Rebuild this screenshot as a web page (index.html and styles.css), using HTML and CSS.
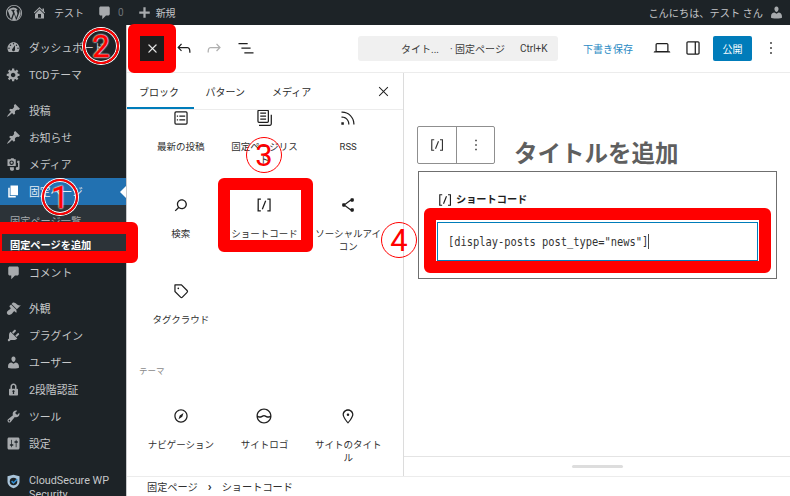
FILE: index.html
```html
<!DOCTYPE html>
<html lang="ja">
<head>
<meta charset="utf-8">
<title>固定ページを追加</title>
<link rel="stylesheet" href="styles.css">
</head>
<body>
<svg class="sprite" aria-hidden="true">
  <symbol id="d-dash" viewBox="0 0 20 20"><path fill-rule="evenodd" d="M3.76 16h12.48c1.1-1.37 1.76-3.11 1.76-5 0-4.42-3.58-8-8-8s-8 3.58-8 8c0 1.89.66 3.63 1.76 5zM10 4c.55 0 1 .45 1 1s-.45 1-1 1-1-.45-1-1 .45-1 1-1zM6 6c.55 0 1 .45 1 1s-.45 1-1 1-1-.45-1-1 .45-1 1-1zm8 0c.55 0 1 .45 1 1s-.45 1-1 1-1-.45-1-1 .45-1 1-1zm-5.37 5.55L12 7v6c0 1.1-.9 2-2 2s-2-.9-2-2c0-.57.24-1.08.63-1.45zM4 10c.55 0 1 .45 1 1s-.45 1-1 1-1-.45-1-1 .45-1 1-1zm12 0c.55 0 1 .45 1 1s-.45 1-1 1-1-.45-1-1 .45-1 1-1z"/></symbol>
  <symbol id="d-gear" viewBox="0 0 20 20"><path d="M18 12h-2.18c-.17.7-.44 1.35-.81 1.93l1.54 1.54-2.1 2.1-1.54-1.54c-.58.36-1.23.63-1.91.79V19H8v-2.18c-.68-.16-1.33-.43-1.91-.79l-1.54 1.54-2.12-2.12 1.54-1.54c-.36-.58-.63-1.23-.79-1.91H1V9.03h2.17c.16-.7.44-1.35.8-1.94L2.43 5.55l2.1-2.1 1.54 1.54c.58-.37 1.24-.64 1.93-.81V2h3v2.18c.68.16 1.33.43 1.91.79l1.54-1.54 2.12 2.12-1.54 1.54c.36.59.64 1.24.8 1.94H18V12zm-8.5 1.5c1.66 0 3-1.34 3-3s-1.34-3-3-3-3 1.34-3 3 1.34 3 3 3z"/></symbol>
  <symbol id="d-pin" viewBox="0 0 20 20"><path d="M10.44 3.02l1.82-1.82 6.36 6.35-1.83 1.82c-1.05-.68-2.48-.57-3.41.36l-.75.75c-.92.93-1.04 2.35-.35 3.41l-1.83 1.82-2.41-2.41-2.8 2.79c-.42.42-3.38 2.71-3.8 2.29s1.86-3.39 2.28-3.81l2.79-2.79L4.1 9.36l1.83-1.82c1.05.69 2.48.57 3.4-.36l.75-.75c.93-.92 1.05-2.35.36-3.41z"/></symbol>
  <symbol id="d-media" viewBox="0 0 20 20"><path fill-rule="evenodd" d="M2 3h4l1-1.500h3l1 1.500h2v9H2V3zm5.500 1.500a3 3 0 1 0 0 6 3 3 0 0 0 0-6zm0 1.500a1.500 1.500 0 1 1 0 3 1.500 1.500 0 0 1 0-3z"/><path d="M15 5h3v10.500a2.500 2 0 1 1-2-2V8h-1V5zM5 13.500h5.500v2a2.500 2 0 0 1-5 1.500z"/></symbol>
  <symbol id="d-page" viewBox="0 0 20 20"><path d="M6 15V2h10v13H6zm-1 1h8v2H3V5h2v11z"/></symbol>
  <symbol id="d-comment" viewBox="0 0 20 20"><path d="M5 2h10c1.100 0 2 .9 2 2v8c0 1.100-.9 2-2 2h-3l-5 5v-5H5c-1.100 0-2-.9-2-2V4c0-1.100.9-2 2-2z"/></symbol>
  <symbol id="d-brush" viewBox="0 0 20 20"><path d="M14.480 11.060L7.410 3.990l1.500-1.500c.5-.56 2.300-.47 3.510.32 1.210.8 1.430 1.280 2.910 2.100 1.180.64 2.450 1.260 4.450.85zm-.710.710L6.700 4.700 4.930 6.470c-.39.390-.39 1.020 0 1.410l1.060 1.060c.39.390.39 1.030 0 1.420-.6.600-1.430 1.110-2.210 1.690-.35.260-.700.530-1.010.840C1.430 13.230.28 16.060 2 17.800c1.730 1.730 4.420.63 5.760-.71.320-.31.640-.67.890-1 .58-.78 1.100-1.610 1.690-2.210.39-.39 1.020-.39 1.410 0l1.060 1.060c.39.390 1.020.39 1.410 0z"/></symbol>
  <symbol id="d-plug" viewBox="0 0 20 20"><path d="M13.110 4.360L9.870 7.600 8 5.730l3.240-3.240c.35-.34 1.050-.2 1.560.32.52.51.66 1.210.31 1.550zm-8 1.770l.91-1.120 9.010 9.010-1.190.84c-.71.71-2.630 1.160-3.820 1.160H6.140L4.900 17.260c-.59.59-1.540.59-2.120 0-.59-.58-.59-1.530 0-2.120l1.240-1.240v-3.880c0-1.130.4-3.190 1.090-3.890zm7.260 3.970l3.240-3.240c.34-.35 1.040-.21 1.550.31.52.51.66 1.210.31 1.550l-3.240 3.250z"/></symbol>
  <symbol id="d-user" viewBox="0 0 20 20"><path d="M10 9.250c-2.270 0-2.730-3.440-2.730-3.440C7 4.020 7.820 2 9.970 2c2.160 0 2.980 2.020 2.710 3.810 0 0-.41 3.440-2.68 3.440zm0 2.570L12.720 10c2.390 0 4.520 2.330 4.520 4.530v2.490s-3.650 1.130-7.240 1.130c-3.650 0-7.240-1.130-7.240-1.130v-2.490c0-2.250 1.940-4.480 4.470-4.480z"/></symbol>
  <symbol id="d-lock" viewBox="0 0 20 20"><path d="M14 9h1c.55 0 1 .45 1 1v7c0 .55-.45 1-1 1H5c-.55 0-1-.45-1-1v-7c0-.55.45-1 1-1h1V6c0-2.200 1.800-4 4-4s4 1.800 4 4v3zm-2 0V6c0-1.100-.9-2-2-2s-2 .9-2 2v3h4zm-1 7l-.36-2.150c.51-.24.86-.75.86-1.350 0-.83-.67-1.500-1.500-1.500s-1.500.67-1.500 1.500c0 .6.35 1.110.86 1.350L9 16h2z"/></symbol>
  <symbol id="d-wrench" viewBox="0 0 20 20"><path d="M16.680 9.770c-1.340 1.340-3.300 1.670-4.950.99l-5.410 6.520c-.99.99-2.590.99-3.580 0s-.99-2.590 0-3.570l6.520-5.420c-.68-1.650-.35-3.610.99-4.950 1.280-1.280 3.120-1.620 4.720-1.060l-2.890 2.890 2.820 2.820 2.860-2.870c.53 1.580.18 3.390-1.080 4.650zM3.810 16.210c.4.39 1.040.39 1.430 0 .4-.4.4-1.040 0-1.430-.39-.4-1.030-.4-1.430 0-.39.39-.39 1.030 0 1.430z"/></symbol>
  <symbol id="d-settings" viewBox="0 0 20 20"><path d="M18 16V4c0-1.100-.9-2-2-2H4c-1.100 0-2 .9-2 2v12c0 1.100.9 2 2 2h12c1.100 0 2-.9 2-2zM8 11h1c.55 0 1 .45 1 1s-.45 1-1 1H8v1.500c0 .28-.22.5-.5.5s-.5-.22-.5-.5V13H6c-.55 0-1-.45-1-1s.45-1 1-1h1V5.500c0-.28.22-.5.5-.5s.5.22.5.5V11zm5-2h-1c-.55 0-1-.45-1-1s.45-1 1-1h1V5.500c0-.28.22-.5.5-.5s.5.22.5.5V7h1c.55 0 1 .45 1 1s-.45 1-1 1h-1v5.500c0 .28-.22.5-.5.5s-.5-.22-.5-.5V9z"/></symbol>
  <symbol id="d-home" viewBox="0 0 20 20"><path d="M16 8.500l1.530 1.530-1.060 1.060L10 4.620l-6.470 6.470-1.060-1.060L10 2.500l4 4v-2h2v4zm-6-2.460l6 5.990V18H4v-5.970zM12 17v-5H8v5h4z"/></symbol>
  <symbol id="d-plus" viewBox="0 0 20 20"><path d="M17 8.500v3h-5.500V17h-3v-5.500H3v-3h5.500V3h3v5.500z"/></symbol>
  <symbol id="d-wp" viewBox="0 0 20 20"><path fill-rule="evenodd" d="M10 1a9 9 0 1 1 0 18 9 9 0 0 1 0-18zm0 1a8 8 0 1 0 0 16 8 8 0 0 0 0-16z"/><path d="M3.200 7.500l3.400 9.300 2.300-6.500-1-2.800H7V6.300h3.800v1.200h-1l2.600 7.800 1.100-3.300c.5-1.500.3-2.600-.4-3.700-.4-.7-.3-1.900 1-2.200a7.200 7.200 0 0 0-11.200 1.400h1.600zM10.100 11l-2.200 6.500a7.300 7.300 0 0 0 4.400-.1zM16.100 6.500c.3 2-.4 3.300-.9 4.800l-2.200 5.900a7.200 7.200 0 0 0 3.100-10.700z"/></symbol>

  <symbol id="g-undo" viewBox="0 0 24 24"><path d="M18.300 11.700c-.6-.6-1.400-.9-2.300-.9H6.700l2.900-3.300-1.100-1-4.500 5L8.500 16l1-1-2.700-2.700H16c.5 0 .9.2 1.300.5 1 1 1 3.400 1 4.500v.3h1.500v-.2c0-1.500 0-4.300-1.500-5.700z"/></symbol>
  <symbol id="g-redo" viewBox="0 0 24 24"><path d="M15.600 6.500l-1.100 1 2.900 3.300H8c-.9 0-1.700.3-2.300.9-1.400 1.500-1.400 4.200-1.400 5.600v.2h1.500v-.3c0-1.100 0-3.500 1-4.500.3-.3.7-.5 1.300-.5h9.200L14.500 15l1.100 1.100 4.600-4.600-4.600-5z"/></symbol>
  <symbol id="g-list" viewBox="0 0 24 24"><path d="M3 6h11v1.500H3V6Zm3.500 5.500h11V13h-11v-1.500ZM21 17H10v1.500h11V17Z"/></symbol>
  <symbol id="g-close" viewBox="0 0 24 24"><path d="m13.060 12 6.470-6.470-1.060-1.060L12 10.940 5.530 4.470 4.470 5.530 10.940 12l-6.470 6.470 1.060 1.060L12 13.060l6.470 6.470 1.060-1.060L13.060 12Z"/></symbol>
  <symbol id="g-desktop" viewBox="0 0 24 24"><path d="M20.500 16h-.7V8c0-1.100-.9-2-2-2H6.200c-1.100 0-2 .9-2 2v8h-.7c-.8 0-1.500.7-1.500 1.500h20c0-.8-.7-1.500-1.500-1.500zM5.700 8c0-.3.2-.5.5-.5h11.600c.3 0 .5.2.5.5v7.600H5.700V8z"/></symbol>
  <symbol id="g-drawer" viewBox="0 0 24 24"><path d="M18 4H6c-1.100 0-2 .9-2 2v12c0 1.100.9 2 2 2h12c1.100 0 2-.9 2-2V6c0-1.100-.9-2-2-2zm-4 14.500H6c-.3 0-.5-.2-.5-.5V6c0-.3.2-.5.5-.5h8v13zm4.500-.5c0 .3-.2.5-.5.5h-2.500v-13H18c.3 0 .5.2.5.5v12z"/></symbol>
  <symbol id="g-kebab" viewBox="0 0 24 24"><path d="M13 19h-2v-2h2v2zm0-6h-2v-2h2v2zm0-6h-2V5h2v2z"/></symbol>
  <symbol id="g-short" viewBox="0 0 24 24"><path d="M16 4.200v1.500h2.500v12.500H16v1.500h4V4.200h-4zM4.200 19.800h4v-1.500H5.800V5.800h2.500V4.200h-4l-.1 15.600zm5.100-3.100l1.400.6 4-10-1.400-.6-4 10z"/></symbol>
  <symbol id="g-search" viewBox="0 0 24 24"><path d="M13 5c-3.300 0-6 2.700-6 6 0 1.400.5 2.700 1.300 3.700l-3.800 3.800 1.100 1.100 3.800-3.800c1 .8 2.300 1.300 3.700 1.300 3.300 0 6-2.700 6-6S16.300 5 13 5zm0 10.500c-2.500 0-4.500-2-4.500-4.500s2-4.500 4.500-4.500 4.500 2 4.500 4.500-2 4.500-4.500 4.500z"/></symbol>
  <symbol id="g-share" viewBox="0 0 24 24"><path d="M9 11.800l6.100-4.500c.1.400.4.700.9.700h2c.6 0 1-.4 1-1V5c0-.6-.4-1-1-1h-2c-.6 0-1 .4-1 1v.4l-6.400 4.800c-.2-.1-.4-.2-.6-.2H6c-.6 0-1 .4-1 1v2c0 .6.4 1 1 1h2c.2 0 .4-.1.6-.2l6.400 4.800v.4c0 .6.4 1 1 1h2c.6 0 1-.4 1-1v-2c0-.6-.4-1-1-1h-2c-.5 0-.8.3-.9.700L9 12.200v-.4z"/></symbol>
  <symbol id="g-tag" viewBox="0 0 24 24"><path d="M4.750 4a.75.75 0 0 0-.75.75v7.826c0 .2.08.39.22.53l6.720 6.716a2.313 2.313 0 0 0 3.276-.001l5.610-5.611-.531-.53.532.528a2.315 2.315 0 0 0 0-3.264L13.104 4.220a.75.75 0 0 0-.53-.22H4.750ZM19 12.576a.815.815 0 0 1-.236.574l-5.610 5.611a.814.814 0 0 1-1.153 0L5.500 12.264V5.500h6.763l6.500 6.502a.816.816 0 0 1 .237.574ZM8.750 9.750a1 1 0 1 0 0-2 1 1 0 0 0 0 2Z"/></symbol>
  <symbol id="g-nav" viewBox="0 0 24 24"><path d="M12 4c-4.400 0-8 3.600-8 8s3.600 8 8 8 8-3.600 8-8-3.600-8-8-8zm0 14.500c-3.600 0-6.500-2.900-6.500-6.500S8.400 5.500 12 5.500s6.500 2.900 6.500 6.500-2.900 6.500-6.500 6.500zM9 16l4.500-3L15 8.400l-4.500 3L9 16z"/></symbol>
  <symbol id="g-logo" viewBox="0 0 24 24"><path d="M12 3c-5 0-9 4-9 9s4 9 9 9 9-4 9-9-4-9-9-9zm0 1.500c3.900 0 7.100 3 7.500 6.800-1.100.9-2.200 1.300-3.300.9-1.300-.5-2.600-1.500-4.200-1.500s-3 1-4.200 1.500c-1.100.4-2.200 0-3.300-.9.4-3.800 3.600-6.800 7.500-6.800zm0 15c-3.600 0-6.600-2.600-7.400-6 1.200.7 2.500 1 3.900.5 1.300-.5 2.300-1.300 3.500-1.300s2.200.8 3.500 1.300c1.400.5 2.700.2 3.900-.5-.8 3.400-3.800 6-7.400 6z"/></symbol>
  <symbol id="g-marker" viewBox="0 0 24 24"><path d="M12 9c-.8 0-1.500.7-1.500 1.500S11.200 12 12 12s1.500-.7 1.500-1.500S12.800 9 12 9zm0-5c-3.600 0-6.500 2.800-6.500 6.200 0 .8.3 1.800.9 3.100.5 1.100 1.200 2.300 2 3.600.7 1 3 3.800 3.200 3.900l.4.500.4-.5c.2-.2 2.600-2.900 3.200-3.900.8-1.200 1.500-2.500 2-3.600.6-1.300.9-2.300.9-3.100C18.500 6.800 15.600 4 12 4zm4.300 8.700c-.5 1-1.100 2.200-1.900 3.400-.5.7-1.700 2.200-2.400 3-.7-.8-1.900-2.300-2.400-3-.8-1.200-1.400-2.300-1.900-3.300-.6-1.400-.7-2.200-.7-2.500 0-2.600 2.200-4.700 5-4.700s5 2.100 5 4.700c0 .2-.1 1-.7 2.400z"/></symbol>
  <symbol id="g-posts" viewBox="0 0 24 24"><path d="M18 5.500H6a.5.5 0 0 0-.5.5v12a.5.5 0 0 0 .5.5h12a.5.5 0 0 0 .5-.5V6a.5.5 0 0 0-.5-.5ZM6 4h12a2 2 0 0 1 2 2v12a2 2 0 0 1-2 2H6a2 2 0 0 1-2-2V6a2 2 0 0 1 2-2Zm1 5h1.500v1.500H7V9Zm1.500 4.500H7V15h1.500v-1.500ZM10 9h7v1.500h-7V9Zm7 4.500h-7V15h7v-1.500Z"/></symbol>
  <symbol id="g-pages" viewBox="0 0 24 24"><path d="M14.500 5.500h-7V7h7V5.500ZM7.500 9h7v1.500h-7V9Zm7 3.500h-7V14h7v-1.500Z"/><path d="M16 2H6a2 2 0 0 0-2 2v12a2 2 0 0 0 2 2h10a2 2 0 0 0 2-2V4a2 2 0 0 0-2-2ZM6 3.500h10a.5.5 0 0 1 .5.5v12a.5.5 0 0 1-.5.5H6a.5.5 0 0 1-.5-.5V4a.5.5 0 0 1 .5-.5Z"/><path d="M20 8v11c0 .69-.31 1-.999 1H6v1.500h13.001c1.520 0 2.499-.982 2.499-2.500V8H20Z"/></symbol>
  <symbol id="g-rss" viewBox="0 0 24 24"><path d="M5 10.200h-.8v1.500H5c1.900 0 3.800.8 5.100 2.100 1.400 1.400 2.100 3.200 2.100 5.100v.8h1.500V19c0-2.300-.9-4.500-2.600-6.200-1.600-1.600-3.800-2.600-6.100-2.600zm10.400-1.600C12.600 5.800 8.900 4.200 5 4.200h-.8v1.500H5c3.500 0 6.900 1.400 9.400 3.900s3.900 5.800 3.900 9.400v.8h1.500V19c0-3.900-1.600-7.600-4.400-10.400zM4 20h3v-3H4v3z"/></symbol>
</svg>

<header class="adminbar">
  <div class="ab-group">
    <svg class="ab-icon ab-wp"><use href="#d-wp"/></svg>
    <span class="ab-item ab-home"><svg class="ab-icon"><use href="#d-home"/></svg>テスト</span>
    <span class="ab-item ab-comments"><svg class="ab-icon"><use href="#d-comment"/></svg><span class="ab-count">0</span></span>
    <span class="ab-item ab-new"><svg class="ab-icon"><use href="#d-plus"/></svg>新規</span>
  </div>
  <div class="ab-item ab-account">こんにちは、テスト さん<svg class="ab-icon"><use href="#d-user"/></svg></div>
</header>

<div class="shell">
  <nav class="sidebar">
    <ul class="menu">
      <li class="menu-item"><svg><use href="#d-dash"/></svg>ダッシュボード</li>
      <li class="menu-item"><svg><use href="#d-gear"/></svg>TCDテーマ</li>
      <li class="menu-item menu-gap"><svg><use href="#d-pin"/></svg>投稿</li>
      <li class="menu-item"><svg><use href="#d-pin"/></svg>お知らせ</li>
      <li class="menu-item"><svg><use href="#d-media"/></svg>メディア</li>
      <li class="menu-item is-current"><svg><use href="#d-page"/></svg>固定ページ</li>
      <li class="submenu">
        <div class="sub-item">固定ページ一覧</div>
        <div class="sub-item is-current">固定ページを追加</div>
      </li>
      <li class="menu-item"><svg><use href="#d-comment"/></svg>コメント</li>
      <li class="menu-item menu-gap"><svg><use href="#d-brush"/></svg>外観</li>
      <li class="menu-item"><svg><use href="#d-plug"/></svg>プラグイン</li>
      <li class="menu-item"><svg><use href="#d-user"/></svg>ユーザー</li>
      <li class="menu-item"><svg><use href="#d-lock"/></svg>2段階認証</li>
      <li class="menu-item"><svg><use href="#d-wrench"/></svg>ツール</li>
      <li class="menu-item"><svg><use href="#d-settings"/></svg>設定</li>
      <li class="menu-item menu-cloud">
        <svg class="cloud-icon" viewBox="0 0 20 20"><path class="cloud-shield" d="M10 1l8 2v7c0 4.500-3.500 7.500-8 9-4.500-1.500-8-4.500-8-9V3z"/><circle class="cloud-ring" cx="10" cy="10" r="5"/><path class="cloud-check" d="M7.500 9.500L10 12l5-5"/></svg>
        <span>CloudSecure WP Security</span>
      </li>
    </ul>
  </nav>

  <main class="editor">
    <div class="topbar">
      <div class="tools">
        <button class="toggle"><svg><use href="#g-close"/></svg></button>
        <svg class="tb-icon"><use href="#g-undo"/></svg>
        <svg class="tb-icon is-off"><use href="#g-redo"/></svg>
        <svg class="tb-icon"><use href="#g-list"/></svg>
      </div>
      <div class="docbar">
        <span class="doc-title">タイト...</span>
        <span class="doc-type">· 固定ページ</span>
        <span class="doc-key">Ctrl+K</span>
      </div>
      <div class="actions">
        <span class="draft">下書き保存</span>
        <svg class="tb-icon"><use href="#g-desktop"/></svg>
        <svg class="tb-icon"><use href="#g-drawer"/></svg>
        <span class="publish">公開</span>
        <svg class="tb-icon"><use href="#g-kebab"/></svg>
      </div>
    </div>

    <div class="workspace">
      <aside class="inserter">
        <div class="tabs">
          <span class="tab is-active">ブロック</span>
          <span class="tab">パターン</span>
          <span class="tab">メディア</span>
          <svg class="tabs-close"><use href="#g-close"/></svg>
        </div>
        <div class="block-scroll">
          <div class="block-grid">
            <div class="block"><svg><use href="#g-posts"/></svg><span>最新の投稿</span></div>
            <div class="block"><svg><use href="#g-pages"/></svg><span>固定ページリスト</span></div>
            <div class="block"><svg><use href="#g-rss"/></svg><span>RSS</span></div>
            <div class="block"><svg><use href="#g-search"/></svg><span>検索</span></div>
            <div class="block"><svg><use href="#g-short"/></svg><span>ショートコード</span></div>
            <div class="block"><svg><use href="#g-share"/></svg><span>ソーシャルアイコン</span></div>
            <div class="block"><svg><use href="#g-tag"/></svg><span>タグクラウド</span></div>
          </div>
          <div class="group-title">テーマ</div>
          <div class="block-grid">
            <div class="block"><svg><use href="#g-nav"/></svg><span>ナビゲーション</span></div>
            <div class="block"><svg><use href="#g-logo"/></svg><span>サイトロゴ</span></div>
            <div class="block"><svg><use href="#g-marker"/></svg><span>サイトのタイトル</span></div>
          </div>
        </div>
      </aside>

      <section class="canvas">
        <div class="canvas-main">
          <div class="title-row">
            <div class="block-toolbar">
              <span class="bt-cell"><svg><use href="#g-short"/></svg></span>
              <span class="bt-cell"><svg><use href="#g-kebab"/></svg></span>
            </div>
            <h1 class="post-title">タイトルを追加</h1>
          </div>
          <div class="shortcode">
            <div class="sc-label"><svg><use href="#g-short"/></svg>ショートコード</div>
            <div class="sc-input"><span class="sc-text">[display-posts post_type="news"]</span></div>
          </div>
        </div>
        <div class="resize-strip"><span class="resize-handle"></span></div>
      </section>
    </div>

    <div class="crumbs"><span>固定ページ</span><span class="crumb-sep">›</span><span>ショートコード</span></div>
  </main>
</div>

<div class="mark mark-a"></div>
<div class="mark mark-b"></div>
<div class="mark mark-c"></div>
<div class="mark mark-d"></div>
<div class="num num-1 num-ring">1</div>
<div class="num num-2 num-ring">2</div>
<div class="num num-3">3</div>
<div class="num num-4">4</div>
</body>
</html>
```
FILE: styles.css
```css
* { box-sizing: border-box; }
html, body { margin: 0; padding: 0; }
body {
  width: 790px;
  height: 496px;
  overflow: hidden;
  position: relative;
  background: #fff;
  font-family: Roboto, "Noto Sans CJK JP", sans-serif;
  font-size: 10px;
  color: #1e1e1e;
  display: flex;
  flex-direction: column;
}
.sprite { display: none; }

/* admin bar */
.adminbar {
  height: 25px;
  flex: none;
  background: #1d2327;
  color: #c3c4c7;
  display: flex;
  justify-content: space-between;
  align-items: center;
  padding: 0 6px 0 5px;
}
.ab-group { display: flex; align-items: center; }
.ab-item { display: flex; align-items: center; }
.ab-icon { width: 15px; height: 15px; fill: #a7aaad; flex: none; }
.ab-wp { width: 18px; height: 18px; }
.ab-home { margin-left: 9px; gap: 7px; }
.ab-comments { margin-left: 13px; gap: 6px; }
.ab-count { color: #6f7479; }
.ab-new { margin-left: 13px; gap: 4px; }
.ab-account { gap: 6px; font-size: 10.2px; }

.shell { flex: 1; display: flex; min-height: 0; }

/* sidebar */
.sidebar {
  width: 127px;
  flex: none;
  background: #1d2327;
  border-right: 1px solid #c8c9cb;
  overflow: hidden;
}
.menu { list-style: none; margin: 0; padding: 9px 0 0; }
.menu-item {
  height: 27px;
  display: flex;
  align-items: center;
  gap: 8px;
  padding: 0 0 1px 6px;
  font-size: 10.8px;
  color: #c6c8ca;
}
.menu-item svg { width: 15px; height: 15px; fill: #a7aaad; flex: none; }
.menu-gap { margin-top: 9px; }
.menu-item.is-current { background: #2271b1; color: #e6eef5; position: relative; }
.menu-item.is-current svg { fill: #fff; }
.menu-item.is-current::after {
  content: "";
  position: absolute;
  right: 0;
  top: 8px;
  border: 6px solid transparent;
  border-right-color: #fff;
  border-left-width: 0;
}
.submenu { background: #2c3338; height: 54px; padding-top: 3px; }
.sub-item { height: 24px; padding-left: 10px; display: flex; align-items: center; font-size: 10.2px; color: #a7aaad; }
.sub-item.is-current { color: #fff; font-weight: 700; }
.menu-cloud { margin-top: 9px; align-items: flex-start; height: 40px; padding-top: 8px; line-height: 14px; padding-left: 6px; }
.menu-cloud span { width: 92px; }
.cloud-icon { width: 15px; height: 15px; }
.cloud-shield { fill: #a9c4da; }
.cloud-ring { fill: #1d2327; stroke: none; }
.cloud-check { fill: none; stroke: #2f8fd6; stroke-width: 2; }

/* editor */
.editor { flex: 1; min-width: 0; display: flex; flex-direction: column; }
.topbar {
  height: 48px;
  flex: none;
  display: flex;
  align-items: center;
  border-bottom: 1px solid #ececec;
  padding-bottom: 1px;
}
.tools { display: flex; align-items: center; padding-left: 13px; width: 231px; flex: none; }
.toggle {
  width: 24px;
  height: 25px;
  border: 0;
  padding: 0;
  background: #1e1e1e;
  display: flex;
  align-items: center;
  justify-content: center;
  margin-right: 10px;
}
.toggle svg { width: 13px; height: 13px; fill: #fff; stroke: #fff; stroke-width: .8; }
.tb-icon { width: 20px; height: 20px; fill: #1e1e1e; flex: none; }
.tools .tb-icon { margin-right: 10px; }
.tools .tb-icon.is-off { fill: #b0b0b0; margin-right: 12px; }
.docbar {
  width: 200px;
  height: 25px;
  flex: none;
  background: #f0f0f0;
  border-radius: 3px;
  display: flex;
  align-items: center;
  padding-left: 43px;
  color: #3a3a3a;
}
.doc-title { width: 49px; }
.doc-type { width: 70px; }
.actions { display: flex; align-items: center; margin-left: 25px; }
.draft { color: #2a8ac4; width: 50px; }
.actions .tb-icon:nth-of-type(1) { margin-left: 19px; }
.actions .tb-icon:nth-of-type(2) { margin-left: 11px; }
.publish {
  width: 39px;
  height: 25px;
  margin-left: 10px;
  background: #007cba;
  color: #fff;
  display: flex;
  align-items: center;
  justify-content: center;
  border-radius: 2px;
}
.publish + .tb-icon { margin-left: 9px; }

.workspace { flex: 1; display: flex; min-height: 0; }

/* inserter */
.inserter {
  width: 277px;
  flex: none;
  display: flex;
  flex-direction: column;
  border-right: 1px solid #dcdcdc;
}
.tabs {
  height: 37px;
  flex: none;
  display: flex;
  align-items: center;
  border-bottom: 1px solid #ececec;
}
.tab { width: 66.5px; padding-left: 12px; height: 100%; display: flex; align-items: center; color: #2a2a2a; }
.tab.is-active { box-shadow: inset 0 -2px 0 #007cba; }
.tabs-close { width: 15px; height: 15px; fill: #1e1e1e; margin-left: auto; margin-right: 12px; }
.block-scroll { flex: 1; overflow: hidden; padding: 0 13px 0 12px; min-height: 0; }
.block-grid { display: grid; grid-template-columns: repeat(3, 1fr); grid-auto-rows: 86.5px; }
.block-grid:first-child { margin-top: -20px; }
.block {
  display: flex;
  flex-direction: column;
  align-items: center;
  padding-top: 18px;
  text-align: center;
}
.block svg { width: 20px; height: 20px; fill: #1e1e1e; flex: none; }
.block span { margin-top: 12px; width: 70px; font-size: 9.5px; line-height: 13px; color: #2f2f2f; }
.group-title { margin-top: 14px; font-size: 8.5px; line-height: 14px; color: #8a8a8a; }
.group-title + .block-grid { margin-top: 10px; }

/* canvas */
.canvas { flex: 1; min-width: 0; display: flex; flex-direction: column; }
.canvas-main { flex: 1; padding: 53px 13px 0 14px; }
.title-row { display: flex; align-items: flex-end; }
.block-toolbar { display: flex; height: 38px; margin-left: -1px; border: 1px solid #8f8f8f; border-radius: 2px; background: #fff; }
.bt-cell { width: 38px; display: flex; align-items: center; justify-content: center; }
.bt-cell + .bt-cell { border-left: 1px solid #8f8f8f; }
.bt-cell svg { width: 18px; height: 18px; fill: #333; }
.post-title { margin: 0 0 -5px 19px; font-size: 23.5px; line-height: 30px; font-weight: 700; color: #5f5f5f; }
.shortcode {
  width: 359px;
  height: 108px;
  margin-top: 7px;
  border: 1px solid #6f6f6f;
  padding: 19px 18px 0;
}
.sc-label { display: flex; align-items: center; gap: 2px; font-weight: 700; font-size: 10.2px; line-height: 18px; color: #1e1e1e; }
.sc-label svg { width: 18px; height: 18px; fill: #1e1e1e; margin-left: -1px; }
.sc-input {
  width: 321px;
  height: 39px;
  margin-top: 13px;
  border: 1px solid #007cba;
  display: flex;
  align-items: center;
  padding-left: 10px;
  background: #fff;
}
.sc-text {
  font-family: "DejaVu Sans Mono", monospace;
  font-size: 13px;
  color: #333;
  transform: scaleX(.8);
  transform-origin: left center;
  white-space: nowrap;
  border-right: 1px solid #1e1e1e;
}
.resize-strip {
  height: 20px;
  flex: none;
  border-top: 1px solid #e4e4e4;
  display: flex;
  align-items: center;
  justify-content: center;
}
.resize-handle { width: 51px; height: 3px; background: #ddd; border-radius: 2px; }

.crumbs {
  height: 20px;
  flex: none;
  border-top: 1px solid #ececec;
  display: flex;
  align-items: center;
  gap: 10px;
  padding-left: 20px;
  font-size: 10.2px;
  color: #2f2f2f;
}
.crumb-sep { font-weight: 700; font-size: 13px; line-height: 14px; }

/* red callouts */
.mark {
  position: absolute;
  border: 12px solid #f00;
  border-radius: 6px;
}
.mark-a { left: -10px; top: 222px; width: 148px; height: 41px; }
.mark-b { left: 128px; top: 24px; width: 48px; height: 49px; }
.mark-c { left: 218px; top: 178px; width: 95px; height: 74px; }
.mark-d { left: 424px; top: 208px; width: 347px; height: 65px; }
.num {
  position: absolute;
  width: 36px;
  height: 36px;
  border-radius: 50%;
  border: 1px solid #f00;
  display: flex;
  align-items: center;
  justify-content: center;
  color: #f00;
  font-family: Roboto, sans-serif;
  font-size: 31px;
  line-height: 1;
  font-weight: 400;
}
.num-ring {
  border: 2px solid #f00;
  box-shadow: 0 0 0 1px #fff, inset 0 0 0 1px #fff;
  -webkit-text-stroke: .5px #f00;
  text-shadow: 0 0 2px #fff, 0 0 2px #fff, 0 0 2px #fff;
}
.num-1 { left: 42px; top: 179px; }
.num-2 { left: 83px; top: 28px; }
.num-3 { left: 246px; top: 137px; }
.num-4 { left: 381px; top: 222px; }
```
